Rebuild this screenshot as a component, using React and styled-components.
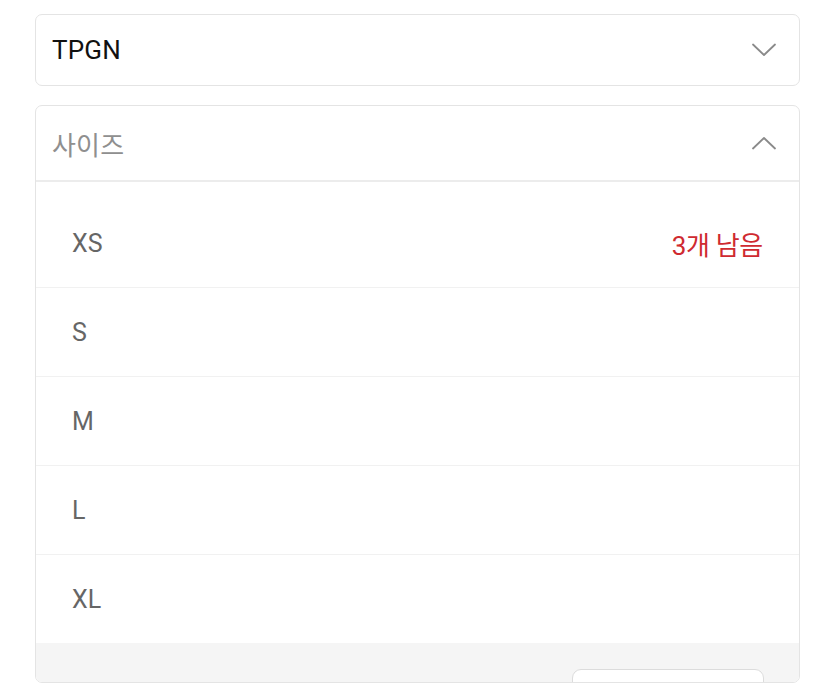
import React from "react";
import styled, { createGlobalStyle } from "styled-components";

const Global = createGlobalStyle`
  html, body { margin: 0; padding: 0; background: #ffffff; }
  body { font-family: Roboto, "Noto Sans CJK KR", "Noto Sans", sans-serif; }
`;

const Page = styled.div`
  display: flex;
  flex-direction: column;
  gap: 19px;
  padding: 14px 35px 0 35px;
  width: 765px;
`;

const Box = styled.div`
  border: 1px solid #e4e4e4;
  border-radius: 7px;
  background: #fff;
  overflow: hidden;
  box-sizing: border-box;
  display: flex;
  flex-direction: column;
  ${(p) => (p.$height ? `height: ${p.$height}px;` : "")}
`;

const Header = styled.div`
  display: flex;
  align-items: center;
  justify-content: space-between;
  height: ${(p) => p.$h}px;
  padding: 0 22px 0 16px;
  flex-shrink: 0;
  ${(p) => (p.$divider ? "border-bottom: 2px solid #ececec;" : "")}
`;

const HeaderText = styled.span`
  font-size: 26px;
  color: ${(p) => (p.$muted ? "#8f8f8f" : "#111")};
  letter-spacing: 0.2px;
`;

const List = styled.div`
  display: flex;
  flex-direction: column;
  padding-top: 17px;
  flex-shrink: 0;
`;

const Row = styled.div`
  display: flex;
  align-items: center;
  justify-content: space-between;
  height: 88px;
  padding: 0 36px;
  border-bottom: 1px solid #f1f1f1;
  &:last-child { border-bottom: none; }
`;

const Size = styled.span`
  font-size: 25px;
  color: #666;
`;

const Stock = styled.span`
  font-size: 26px;
  color: #cf2a30;
  letter-spacing: -0.3px;
`;

const Footer = styled.div`
  flex: 1;
  background: #f5f5f5;
  display: flex;
  align-items: flex-start;
  justify-content: space-between;
  padding: 26px 36px 0 104px;
`;

const FooterNote = styled.span`
  font-size: 22px;
  color: #999;
  margin-top: 6px;
  white-space: nowrap;
`;

const NotifyButton = styled.button`
  display: flex;
  align-items: center;
  gap: 12px;
  width: 192px;
  height: 48px;
  padding: 2px 20px 0 22px;
  background: #fff;
  border: 1px solid #dcdcdc;
  border-radius: 9px;
  font-family: inherit;
  font-size: 20px;
  color: #222;
  white-space: nowrap;
  margin-right: -1px;
`;

const Chevron = ({ up }) => (
  <svg width="26" height="14" viewBox="0 0 26 14" fill="none">
    <path
      d={up ? "M2 12.5 L13 2 L24 12.5" : "M2 1.5 L13 12 L24 1.5"}
      stroke="#8a8a8a"
      strokeWidth="1.8"
      strokeLinecap="round"
      strokeLinejoin="round"
    />
  </svg>
);

const Bell = () => (
  <svg width="18" height="20" viewBox="0 0 18 20" fill="#222">
    <path d="M9 1c-3.3 0-5.5 2.5-5.5 5.8V11L1.5 14.5h15L14.5 11V6.8C14.5 3.5 12.3 1 9 1z" />
    <path d="M6.8 16.5a2.2 2.2 0 0 0 4.4 0z" />
  </svg>
);

const sizes = [
  { name: "XS", stock: "3개 남음" },
  { name: "S" },
  { name: "M" },
  { name: "L" },
  { name: "XL" },
];

export default function App() {
  return (
    <>
      <Global />
      <Page>
        <Box>
          <Header $h={70}>
            <HeaderText>TPGN</HeaderText>
            <Chevron />
          </Header>
        </Box>
        <Box $height={578}>
          <Header $h={74} $divider>
            <HeaderText $muted>사이즈</HeaderText>
            <Chevron up />
          </Header>
          <List>
            {sizes.map((s) => (
              <Row key={s.name}>
                <Size>{s.name}</Size>
                {s.stock && <Stock>{s.stock}</Stock>}
              </Row>
            ))}
          </List>
          <Footer>
            <FooterNote>재입고 알림</FooterNote>
            <NotifyButton>
              <Bell />
              <span>재입고 알림 신청</span>
            </NotifyButton>
          </Footer>
        </Box>
      </Page>
    </>
  );
}
